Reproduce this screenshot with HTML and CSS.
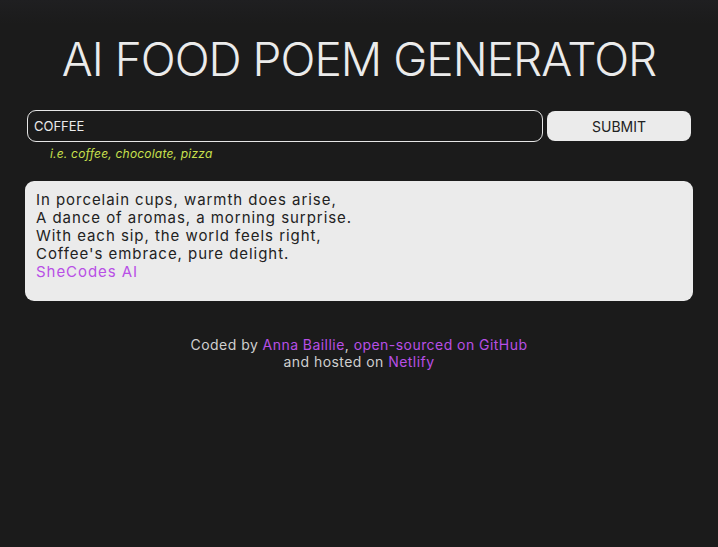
FILE: index.html
```html
<!DOCTYPE html>
<html lang="en">
<head>
<meta charset="utf-8">
<title>AI Food Poem Generator</title>
<link rel="stylesheet" href="styles.css">
</head>
<body>
<div class="container">
  <h1 class="title">AI FOOD POEM GENERATOR</h1>
  <form class="search">
    <input class="search-input" type="text" value="COFFEE">
    <button class="search-button" type="button">SUBMIT</button>
  </form>
  <div class="hint">i.e. coffee, chocolate, pizza</div>
  <div class="poem">
    In porcelain cups, warmth does arise,<br>
    A dance of aromas, a morning surprise.<br>
    With each sip, the world feels right,<br>
    Coffee's embrace, pure delight.<br>
    <span class="accent">SheCodes AI</span>
  </div>
  <footer class="footer">
    Coded by <a href="#">Anna Baillie</a>, <a href="#">open-sourced on GitHub</a><br>
    and hosted on <a href="#">Netlify</a>
  </footer>
</div>
</body>
</html>
```

FILE: styles.css
```css
html, body {
  margin: 0;
  padding: 0;
}
body {
  background: linear-gradient(#1f1f21 0, #1b1b1b 24px) #1b1b1b;
  min-height: 547px;
  font-family: Inter, "Liberation Sans", sans-serif;
  color: #ebebeb;
}
.container {
  padding: 0 25px;
}
.title {
  margin: 0;
  padding-top: 33px;
  text-align: center;
  font-weight: 300;
  font-size: 46px;
  line-height: 52px;
  letter-spacing: -1px;
  color: #ebebeb;
}
.search {
  display: flex;
  gap: 4px;
  margin-top: 25px;
  padding: 0 2px;
  align-items: center;
}
.search-input {
  flex: 1;
  height: 32px;
  box-sizing: border-box;
  background: #1b1b1b;
  border: 1px solid #e6e6e6;
  border-radius: 9px;
  color: #ebebeb;
  font-family: Inter, "Liberation Sans", sans-serif;
  font-size: 13px;
  padding: 0 6px;
  outline: none;
}
.search-button {
  width: 144px;
  height: 30px;
  background: #ebebeb;
  border: none;
  border-radius: 8px;
  font-family: Inter, "Liberation Sans", sans-serif;
  font-size: 14px;
  color: #222;
  padding: 0;
}
.hint {
  margin: 5px 0 0 25px;
  font-size: 12px;
  font-style: italic;
  color: #c9e04d;
  line-height: 14px;
  letter-spacing: 0.2px;
}
.poem {
  margin-top: 20px;
  background: #ebebeb;
  border-radius: 9px;
  padding: 10px 11px 20px;
  color: #222;
  font-size: 15px;
  line-height: 18px;
  letter-spacing: 0.95px;
  min-height: 90px;
}
.accent {
  color: #b84fe6;
}
.footer {
  margin-top: 35px;
  text-align: center;
  font-size: 14px;
  line-height: 17px;
  letter-spacing: 0.45px;
  color: #cfcfcf;
}
.footer a {
  color: #b84fe6;
  text-decoration: none;
}
```
